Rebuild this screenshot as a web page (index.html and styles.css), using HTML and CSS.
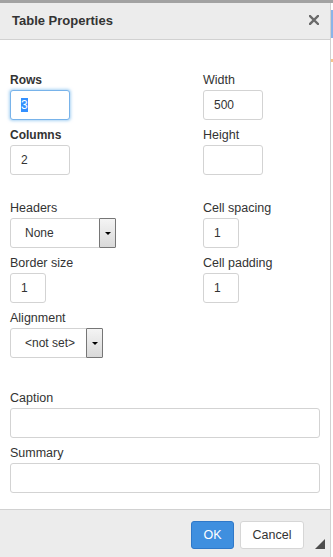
FILE: index.html
```html
<!DOCTYPE html>
<html>
<head>
<meta charset="utf-8">
<title>Table Properties</title>
<link rel="stylesheet" href="styles.css">
</head>
<body>
<div class="topline"></div>
<div class="screen">
  <div class="dialog">
    <div class="titlebar">
      <span class="title">Table Properties</span>
      <svg class="close" width="10" height="10" viewBox="0 0 10 10" aria-label="Close">
        <path d="M1 1 L9 9 M9 1 L1 9" stroke="#6a6a6a" stroke-width="2.4" stroke-linecap="square" fill="none"/>
      </svg>
    </div>
    <div class="content">
      <div class="group">
        <div class="field">
          <span class="label req">Rows</span>
          <div class="input w60 focus"><span class="selected">3</span></div>
        </div>
        <div class="field">
          <span class="label">Width</span>
          <div class="input w60">500</div>
        </div>
        <div class="field">
          <span class="label req">Columns</span>
          <div class="input w60">2</div>
        </div>
        <div class="field">
          <span class="label">Height</span>
          <div class="input w60"></div>
        </div>
      </div>
      <div class="group g2">
        <div class="field">
          <span class="label">Headers</span>
          <div class="select w106">None<span class="dropbtn"><span class="arrow"></span></span></div>
        </div>
        <div class="field">
          <span class="label">Cell spacing</span>
          <div class="input w36">1</div>
        </div>
        <div class="field">
          <span class="label">Border size</span>
          <div class="input w36">1</div>
        </div>
        <div class="field">
          <span class="label">Cell padding</span>
          <div class="input w36">1</div>
        </div>
        <div class="field">
          <span class="label">Alignment</span>
          <div class="select w93">&lt;not set&gt;<span class="dropbtn"><span class="arrow"></span></span></div>
        </div>
      </div>
      <div class="group g3">
        <div class="field">
          <span class="label">Caption</span>
          <div class="input wfull"></div>
        </div>
        <div class="field">
          <span class="label">Summary</span>
          <div class="input wfull"></div>
        </div>
      </div>
    </div>
    <div class="footer">
      <span class="btn ok">OK</span>
      <span class="btn cancel">Cancel</span>
      <svg class="resize" width="10" height="10" viewBox="0 0 10 10"><polygon points="10,0 10,10 0,10" fill="#4d4d4d"/></svg>
    </div>
  </div>
  <div class="backdrop"><div class="blue"></div><div class="dot"></div></div>
</div>
</body>
</html>
```

FILE: styles.css
```css
* { box-sizing: border-box; }
html, body {
  margin: 0;
  padding: 0;
  background: #ffffff;
  font-family: "Liberation Sans", Arial, sans-serif;
  color: #333333;
}
.topline {
  height: 3px;
  background: #a2a2a2;
}
.screen {
  display: flex;
  height: 554px;
}
.dialog {
  width: 331px;
  flex: none;
  border-right: 1px solid #d1d1d1;
  display: flex;
  flex-direction: column;
  position: relative;
  background: #fff;
}
.titlebar {
  height: 37px;
  background: #ececec;
  border-bottom: 1px solid #d1d1d1;
  display: flex;
  align-items: center;
  justify-content: space-between;
  padding: 0 11px 0 12px;
}
.title {
  font-size: 13px;
  font-weight: bold;
  color: #333;
  line-height: 36px;
}
.close {
  display: block;
  margin-top: -2px;
}
.content {
  height: 469px;
  padding: 32px 10px 0 10px;
}
.group {
  display: grid;
  grid-template-columns: 193px 1fr;
  row-gap: 7px;
}
.g2 { margin-top: 25px; }
.g3 { margin-top: 32px; grid-template-columns: 1fr; }
.field {
  display: flex;
  flex-direction: column;
  align-items: flex-start;
}
.label {
  display: block;
  font-size: 12.5px;
  line-height: 16px;
  height: 16px;
  margin-bottom: 2px;
  color: #333;
  white-space: nowrap;
}
.label.req {
  font-weight: bold;
  font-size: 12px;
}
.input {
  height: 30px;
  border: 1px solid #d3d3d3;
  border-radius: 3px;
  padding: 0 10px;
  font-size: 12px;
  line-height: 28px;
  color: #333;
  background: #fff;
  white-space: nowrap;
}
.input.focus {
  border-color: #78b3ea;
  box-shadow: 0 0 3px 1px rgba(102, 175, 233, 0.55);
}
.selected {
  display: inline-block;
  background: #3390ff;
  color: #fff;
  line-height: 14px;
  height: 14px;
  vertical-align: middle;
  margin-top: -2px;
}
.w60 { width: 60px; }
.w36 { width: 36px; }
.wfull { width: 310px; }
.select {
  position: relative;
  height: 30px;
  border: 1px solid #d3d3d3;
  border-radius: 3px;
  padding-left: 14px;
  font-size: 12px;
  line-height: 28px;
  color: #333;
  background: #fff;
  white-space: nowrap;
}
.w106 { width: 106px; }
.w93 { width: 93px; }
.dropbtn {
  position: absolute;
  top: -1px;
  right: -1px;
  width: 17px;
  height: 30px;
  border: 1px solid #767676;
  border-radius: 1px;
  background: linear-gradient(#f4f4f4, #d9d9d9);
  display: flex;
  align-items: center;
  justify-content: center;
}
.arrow {
  width: 0;
  height: 0;
  border-left: 3px solid transparent;
  border-right: 3px solid transparent;
  border-top: 3px solid #000;
  margin-top: 1px;
}
.footer {
  flex: 1;
  background: #ececec;
  border-top: 1px solid #d1d1d1;
  display: flex;
  justify-content: flex-end;
  align-items: flex-start;
  gap: 6px;
  padding: 11px 26px 0 0;
  position: relative;
}
.btn {
  display: block;
  height: 28px;
  border-radius: 3px;
  font-size: 12.5px;
  line-height: 26px;
  text-align: center;
}
.ok {
  width: 43px;
  background: #3f8fdf;
  border: 1px solid #2f78c8;
  color: #fff;
}
.cancel {
  width: 64px;
  background: #fff;
  border: 1px solid #d6d6d6;
  color: #333;
}
.resize {
  position: absolute;
  right: 5px;
  bottom: 8px;
}
.backdrop {
  flex: 1;
  background: #fff;
}
.blue {
  margin-top: 7px;
  height: 28px;
  background: #8ab4e8;
}
.dot {
  margin-top: 21px;
  height: 3px;
  background: #f5c58a;
}
```
